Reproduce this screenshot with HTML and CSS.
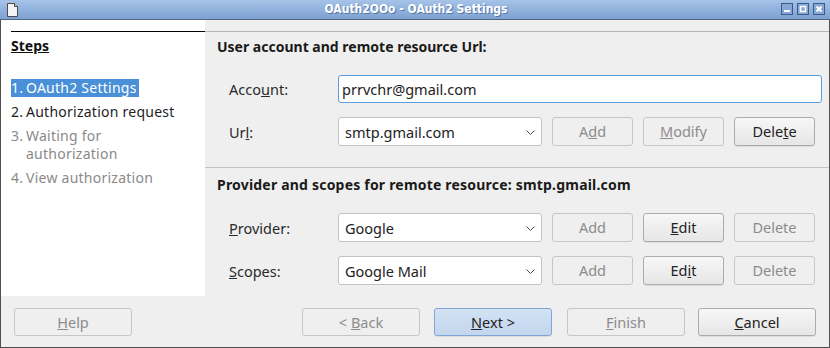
FILE: index.html
```html
<!DOCTYPE html>
<html lang="en">
<head>
<meta charset="utf-8">
<title>OAuth2OOo - OAuth2 Settings</title>
<link rel="stylesheet" href="styles.css">
</head>
<body>
<div class="window">
  <div class="titlebar">
    <div class="tb-left">
      <svg class="app-icon" width="11" height="14" viewBox="0 0 11 14">
        <path d="M0.5 0.5 H7.5 L10.5 3.5 V13.5 H0.5 Z" fill="#f4f4f4" stroke="#4a4a4a"/>
        <path d="M7.5 0.5 V3.5 H10.5" fill="#cfcfcf" stroke="#4a4a4a"/>
      </svg>
    </div>
    <div class="title">OAuth2OOo - OAuth2 Settings</div>
    <div class="wm-buttons">
      <span class="wm-btn"><svg width="12" height="12" viewBox="0 0 12 12"><rect x="3" y="7" width="6" height="2" fill="#fff"/></svg></span>
      <span class="wm-btn"><svg width="12" height="12" viewBox="0 0 12 12"><rect x="3.5" y="3.5" width="5" height="5" fill="none" stroke="#fff" stroke-width="1.5"/></svg></span>
      <span class="wm-btn"><svg width="12" height="12" viewBox="0 0 12 12"><path d="M3.5 3.5 L8.5 8.5 M8.5 3.5 L3.5 8.5" stroke="#fff" stroke-width="2"/></svg></span>
    </div>
  </div>

  <div class="main">
    <aside class="steps">
      <div class="steps-inner">
        <div class="steps-title">Steps</div>
        <ul class="step-list">
          <li class="step selected"><span class="num">1.</span><span class="txt">OAuth2 Settings</span></li>
          <li class="step"><span class="num">2.</span><span class="txt">Authorization request</span></li>
          <li class="step disabled"><span class="num">3.</span><span class="txt">Waiting for<br>authorization</span></li>
          <li class="step disabled"><span class="num">4.</span><span class="txt">View authorization</span></li>
        </ul>
      </div>
    </aside>

    <section class="content">
      <div class="group group-first">
        <h2 class="group-title">User account and remote resource Url:</h2>
        <div class="row row-account">
          <label class="label">Acco<u>u</u>nt:</label>
          <div class="input focused">prrvchr@gmail.com</div>
        </div>
        <div class="row row-gap">
          <label class="label">Ur<u>l</u>:</label>
          <div class="combo"><span>smtp.gmail.com</span><svg class="chev" width="9" height="5" viewBox="0 0 9 5"><polyline points="0.5,0.5 4.5,4.5 8.5,0.5" fill="none" stroke="#4a4a4a"/></svg></div>
          <button class="btn" disabled>A<u>d</u>d</button>
          <button class="btn" disabled><u>M</u>odify</button>
          <button class="btn">Dele<u>t</u>e</button>
        </div>
      </div>
      <div class="group group-second">
        <h2 class="group-title">Provider and scopes for remote resource: smtp.gmail.com</h2>
        <div class="row">
          <label class="label"><u>P</u>rovider:</label>
          <div class="combo"><span>Google</span><svg class="chev" width="9" height="5" viewBox="0 0 9 5"><polyline points="0.5,0.5 4.5,4.5 8.5,0.5" fill="none" stroke="#4a4a4a"/></svg></div>
          <button class="btn" disabled>Add</button>
          <button class="btn"><u>E</u>dit</button>
          <button class="btn" disabled>Delete</button>
        </div>
        <div class="row row-gap">
          <label class="label"><u>S</u>copes:</label>
          <div class="combo"><span>Google Mail</span><svg class="chev" width="9" height="5" viewBox="0 0 9 5"><polyline points="0.5,0.5 4.5,4.5 8.5,0.5" fill="none" stroke="#4a4a4a"/></svg></div>
          <button class="btn" disabled>Add</button>
          <button class="btn">Ed<u>i</u>t</button>
          <button class="btn" disabled>Delete</button>
        </div>
      </div>
    </section>
  </div>

  <div class="footer">
    <button class="btn wide" disabled><u>H</u>elp</button>
    <div class="spacer"></div>
    <button class="btn wide" disabled>&lt; <u>B</u>ack</button>
    <button class="btn wide default next"><u>N</u>ext &gt;</button>
    <button class="btn wide finish" disabled><u>F</u>inish</button>
    <button class="btn wide cancel"><u>C</u>ancel</button>
  </div>
</div>
</body>
</html>
```

FILE: styles.css
```css
* { box-sizing: border-box; }

html, body {
  margin: 0;
  padding: 0;
  background: #efefef;
}

body {
  font-family: "Noto Sans", "Open Sans", sans-serif;
  font-size: 14.5px;
  color: #2a2a2a;
}

.window {
  width: 830px;
  height: 348px;
  display: flex;
  flex-direction: column;
  background: #efefef;
}

/* Title bar */
.titlebar {
  height: 20px;
  display: grid;
  grid-template-columns: 1fr auto 1fr;
  align-items: center;
  padding: 0 5px 1px 7px;
  background: linear-gradient(#a6c3e8, #7da1d2);
  border-bottom: 1px solid #4f6685;
}

.tb-left { display: flex; }

.app-icon { flex: none; margin-top: 1px; }

.title {
  text-align: center;
  font-family: "DejaVu Sans Condensed", "DejaVu Sans", sans-serif;
  font-stretch: condensed;
  font-weight: bold;
  font-size: 12px;
  color: #ffffff;
  text-shadow: 1px 1px 0 #5576a4;
}

.wm-buttons {
  display: flex;
  justify-content: flex-end;
  gap: 4px;
}

.wm-btn {
  width: 12px;
  height: 12px;
  border: 1px solid #3b5a86;
  background: #86a8d6;
  display: flex;
}

.wm-btn svg { margin: -1px; }

/* Main area */
.main {
  height: 276px;
  display: flex;
  border-left: 1px solid #505050;
  border-right: 1px solid #505050;
}

.steps {
  width: 204px;
  flex: none;
  background: #ffffff;
  padding-top: 11px;
}

.steps-inner {
  margin-left: 10px;
  border-top: 1px solid #000000;
  padding-top: 5px;
}

.steps-title {
  font-weight: bold;
  font-size: 14px;
  text-decoration: underline;
  line-height: 18px;
  color: #111;
}

.step-list {
  list-style: none;
  margin: 23px 0 0 0;
  padding: 0;
  font-size: 14px;
  letter-spacing: 0.25px;
}

.step {
  display: flex;
  line-height: 18px;
  margin-bottom: 6px;
  color: #1e1e1e;
}

.step .num { width: 15px; flex: none; }

.step.selected {
  display: inline-flex;
  background: #4a90d9;
  color: #ffffff;
  padding-right: 2px;
}

.step.disabled { color: #8a8a8a; }

.content {
  flex: 1;
  padding-top: 11px;
  background: #efefef;
}

.group {
  border-top: 1px solid #b6b6b6;
  padding-left: 12px;
  padding-right: 7px;
}

.group-first {
  padding-top: 5px;
  padding-bottom: 21px;
}

.group-second {
  border-top-color: #c4c4c4;
  padding-top: 7px;
  padding-bottom: 11px;
}

.group-title {
  margin: 0 0 18px 0;
  font-size: 14px;
  font-weight: bold;
  line-height: 20px;
  color: #1a1a1a;
}

.group-second .group-title { letter-spacing: 0.2px; }

.row {
  display: flex;
  align-items: center;
  padding-left: 12px;
  gap: 10px;
}

.row-gap { margin-top: 14px; }

.label {
  width: 99px;
  flex: none;
  color: #2a2a2a;
}

.input {
  flex: 1;
  height: 28px;
  background: #ffffff;
  border: 1px solid #c2c2c2;
  border-radius: 3px;
  padding: 0 3px;
  line-height: 26px;
  color: #222;
}

.input.focused { border-color: #5b9ee0; }

.combo {
  width: 204px;
  height: 29px;
  flex: none;
  display: flex;
  align-items: center;
  justify-content: space-between;
  background: #ffffff;
  border: 1px solid #c2c2c2;
  border-radius: 3px;
  padding: 0 6px 0 6px;
  color: #222;
}

.chev { flex: none; margin-top: 1px; }

.btn {
  width: 81px;
  height: 29px;
  flex: none;
  font-family: inherit;
  font-size: 14.5px;
  color: #222;
  background: linear-gradient(#f7f7f7, #e6e6e6);
  border: 1px solid #acacac;
  border-radius: 3px;
  box-shadow: 0 1px 0 rgba(0,0,0,0.08);
  padding: 0;
  line-height: 27px;
}

.btn:disabled {
  background: #efefef;
  border-color: #c6c6c6;
  box-shadow: none;
  color: #8c8c8c;
}

/* Footer */
.footer {
  height: 52px;
  display: flex;
  align-items: flex-start;
  padding: 12px 13px 0 13px;
  border-left: 1px solid #505050;
  border-right: 1px solid #505050;
  border-bottom: 1px solid #505050;
}

.spacer { flex: 1; }

.btn.wide {
  width: 118px;
  height: 28px;
  line-height: 26px;
}

.btn.default {
  background: linear-gradient(#d3e2f4, #c3d6ee);
  border-color: #7fa6d6;
}

.next { margin-left: 14px; }
.finish { margin-left: 15px; }
.cancel { margin-left: 13px; }
```
